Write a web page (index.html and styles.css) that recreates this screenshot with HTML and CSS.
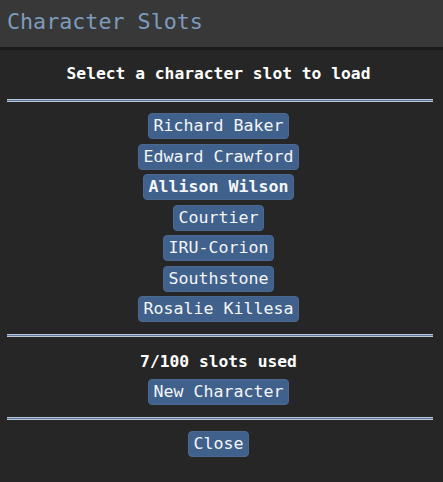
FILE: index.html
```html
<!DOCTYPE html>
<html>
<head>
<meta charset="utf-8">
<link rel="stylesheet" href="styles.css">
</head>
<body>
<header class="titlebar"><span class="title">Character Slots</span></header>
<main class="panel">
  <div class="heading heading-top">Select a character slot to load</div>
  <hr class="rule rule-top">
  <div class="slots">
    <button class="btn">Richard Baker</button>
    <button class="btn">Edward Crawford</button>
    <button class="btn btn-active">Allison Wilson</button>
    <button class="btn">Courtier</button>
    <button class="btn">IRU-Corion</button>
    <button class="btn">Southstone</button>
    <button class="btn">Rosalie Killesa</button>
  </div>
  <hr class="rule rule-mid">
  <div class="heading heading-count">7/100 slots used</div>
  <div class="single new-wrap"><button class="btn">New Character</button></div>
  <hr class="rule rule-bottom">
  <div class="single close-wrap"><button class="btn">Close</button></div>
</main>
</body>
</html>
```
FILE: styles.css
```css
html, body {
  margin: 0;
  padding: 0;
  background: #262626;
  height: 100%;
}
body {
  font-family: "DejaVu Sans Mono", "Liberation Mono", monospace;
  color: #ffffff;
}
.titlebar {
  height: 47px;
  background: #383838;
  border-bottom: 3px solid #1b1b1b;
  display: flex;
  align-items: center;
  padding-left: 7px;
}
.title {
  font-size: 21.7px;
  color: #7d9bbd;
  line-height: 26px;
  margin-top: -3px;
}
.panel {
  display: flex;
  flex-direction: column;
  align-items: center;
  padding-right: 6px;
}
.heading {
  font-weight: bold;
  font-size: 16.3px;
  line-height: 20px;
  text-align: center;
}
.heading-top { margin-top: 14px; }
.heading-count { margin-top: 15px; }
.rule {
  align-self: stretch;
  margin: 0 4px 0 7px;
  height: 1px;
  border: none;
  border-top: 1px solid #bcc6d4;
  border-bottom: 1px solid #bcc6d4;
  background: #5878a4;
}
.rule-top { margin-top: 15px; }
.rule-mid { margin-top: 12px; }
.rule-bottom { margin-top: 12px; }
.slots {
  display: flex;
  flex-direction: column;
  align-items: center;
  gap: 4.5px;
  margin-top: 11px;
}
.btn {
  font-family: "DejaVu Sans Mono", "Liberation Mono", monospace;
  font-size: 16.6px;
  line-height: 24px;
  height: 26px;
  padding: 0 5px;
  color: #f4f6f8;
  background: #40618b;
  border: 1px solid #4a6890;
  border-radius: 4px;
  white-space: nowrap;
}
.btn-active { font-weight: bold; }
.single { display: flex; justify-content: center; }
.new-wrap { margin-top: 7px; }
.close-wrap { margin-top: 11px; }
```
